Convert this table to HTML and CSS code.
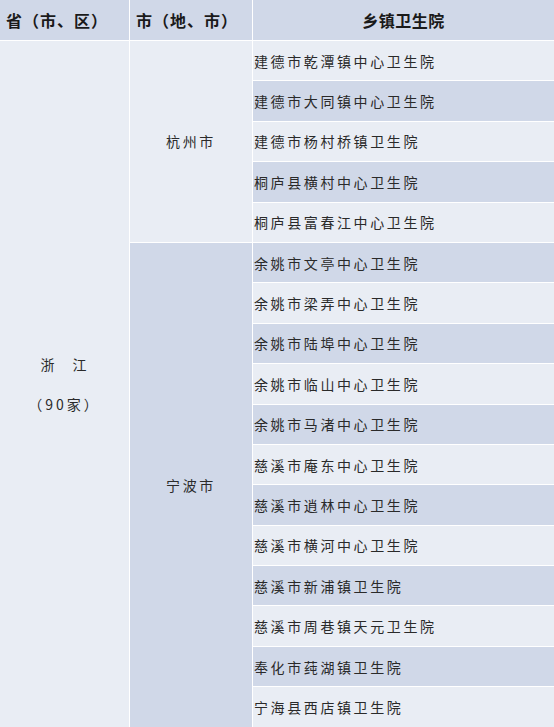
FILE: index.html
```html
<!DOCTYPE html>
<html lang="zh-CN">
<head>
<meta charset="utf-8">
<link rel="stylesheet" href="styles.css">
</head>
<body>
<div class="table">
  <div class="th th-left">省（市、区）</div>
  <div class="th th-left">市（地、市）</div>
  <div class="th th-center">乡镇卫生院</div>

  <div class="prov light">
    <div class="line">浙　江</div>
    <div class="line line-count">（90家）</div>
  </div>
  <div class="city city-hz light">杭州市</div>
  <div class="city city-nb dark">宁波市</div>

  <div class="town light r1">建德市乾潭镇中心卫生院</div>
  <div class="town dark r2">建德市大同镇中心卫生院</div>
  <div class="town light r3">建德市杨村桥镇卫生院</div>
  <div class="town dark r4">桐庐县横村中心卫生院</div>
  <div class="town light r5">桐庐县富春江中心卫生院</div>
  <div class="town dark r6">余姚市文亭中心卫生院</div>
  <div class="town light r7">余姚市梁弄中心卫生院</div>
  <div class="town dark r8">余姚市陆埠中心卫生院</div>
  <div class="town light r9">余姚市临山中心卫生院</div>
  <div class="town dark r10">余姚市马渚中心卫生院</div>
  <div class="town light r11">慈溪市庵东中心卫生院</div>
  <div class="town dark r12">慈溪市逍林中心卫生院</div>
  <div class="town light r13">慈溪市横河中心卫生院</div>
  <div class="town dark r14">慈溪市新浦镇卫生院</div>
  <div class="town light r15">慈溪市周巷镇天元卫生院</div>
  <div class="town dark r16">奉化市莼湖镇卫生院</div>
  <div class="town light r17">宁海县西店镇卫生院</div>
</div>
</body>
</html>
```
FILE: styles.css
```css
html, body {
  margin: 0;
  padding: 0;
  background: #ffffff;
}
body {
  font-family: "Noto Sans CJK SC", "Noto Sans", sans-serif;
  color: #2a2a2a;
}
.table {
  width: 554px;
  display: grid;
  grid-template-columns: 129px 122px 1fr;
  grid-template-rows: 40px repeat(17, 39.4px);
  column-gap: 1px;
  row-gap: 1px;
  background: #ffffff;
}
.th {
  background: #d0d8e8;
  font-weight: bold;
  font-size: 16px;
  color: #1a1a1a;
  display: flex;
  align-items: center;
  letter-spacing: 1px;
}
.th-left {
  padding-left: 6px;
}
.th-center {
  justify-content: center;
  letter-spacing: 0.5px;
}
.light { background: #e9edf4; }
.dark { background: #d0d8e8; }
.prov {
  grid-column: 1;
  grid-row: 2 / 19;
  display: flex;
  flex-direction: column;
  justify-content: center;
  align-items: center;
  font-size: 14px;
  letter-spacing: 2px;
}
.prov .line {
  line-height: 40px;
}
.prov .line-count {
  letter-spacing: 3px;
}
.city {
  grid-column: 2;
  display: flex;
  justify-content: center;
  align-items: center;
  font-size: 14px;
  letter-spacing: 2.6px;
}
.city-hz { grid-row: 2 / 7; }
.city-nb { grid-row: 7 / 19; }
.town {
  grid-column: 3;
  display: flex;
  align-items: center;
  padding-left: 1px;
  font-size: 14px;
  letter-spacing: 2.6px;
  white-space: nowrap;
}
.r1 { grid-row: 2; }
.r2 { grid-row: 3; }
.r3 { grid-row: 4; }
.r4 { grid-row: 5; }
.r5 { grid-row: 6; }
.r6 { grid-row: 7; }
.r7 { grid-row: 8; }
.r8 { grid-row: 9; }
.r9 { grid-row: 10; }
.r10 { grid-row: 11; }
.r11 { grid-row: 12; }
.r12 { grid-row: 13; }
.r13 { grid-row: 14; }
.r14 { grid-row: 15; }
.r15 { grid-row: 16; }
.r16 { grid-row: 17; }
.r17 { grid-row: 18; }
```
